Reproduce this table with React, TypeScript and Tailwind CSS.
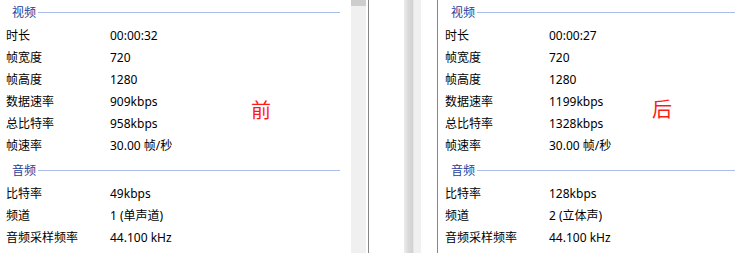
import React from "react";

type Row = [string, string];

const font = { fontFamily: '"Noto Sans", "Noto Sans CJK SC", sans-serif' };

function Header({ title, top }: { title: string; top?: boolean }) {
  return (
    <div className={top ? "flex h-[24px] items-center" : "flex h-[26px] items-center pt-[3px]"}>
      <span className="pl-[12px] pr-[2px] pt-px text-[12px] leading-[16px] text-[#1f3d9c]">{title}</span>
      <div className="h-px flex-1 bg-[#a9bde6]" />
    </div>
  );
}

function Rows({ rows }: { rows: Row[] }) {
  return (
    <div className="flex flex-col">
      {rows.map(([k, v]) => (
        <div key={k} className="flex h-[22px] items-center pt-[2px] text-[12px] leading-[16px] text-black">
          <span className="w-[104px] pl-[6px] box-content">{k}</span>
          <span>{v}</span>
        </div>
      ))}
    </div>
  );
}

function Panel({ video, audio }: { video: Row[]; audio: Row[] }) {
  return (
    <div className="flex flex-col">
      <Header title="视频" top />
      <Rows rows={video} />
      <Header title="音频" />
      <Rows rows={audio} />
    </div>
  );
}

export default function App() {
  const leftVideo: Row[] = [
    ["时长", "00:00:32"],
    ["帧宽度", "720"],
    ["帧高度", "1280"],
    ["数据速率", "909kbps"],
    ["总比特率", "958kbps"],
    ["帧速率", "30.00 帧/秒"],
  ];
  const leftAudio: Row[] = [
    ["比特率", "49kbps"],
    ["频道", "1 (单声道)"],
    ["音频采样频率", "44.100 kHz"],
  ];
  const rightVideo: Row[] = [
    ["时长", "00:00:27"],
    ["帧宽度", "720"],
    ["帧高度", "1280"],
    ["数据速率", "1199kbps"],
    ["总比特率", "1328kbps"],
    ["帧速率", "30.00 帧/秒"],
  ];
  const rightAudio: Row[] = [
    ["比特率", "128kbps"],
    ["频道", "2 (立体声)"],
    ["音频采样频率", "44.100 kHz"],
  ];

  return (
    <div className="relative flex h-[253px] w-[735px] overflow-hidden bg-white" style={font}>
      <div className="w-[351px] pr-[11px]">
        <Panel video={leftVideo} audio={leftAudio} />
      </div>
      <div className="w-[15px] bg-[#f0f0f0]">
        <div className="h-[6px] bg-[#cdcdcd]" />
      </div>
      <div className="w-[2px]" />
      <div className="w-px bg-[#868686]" />
      <div className="w-[35px]" />
      <div className="w-[9px] bg-gradient-to-r from-[#ececec] via-[#d9d9d9] to-[#d2d2d2]" />
      <div className="w-[8px] border-l border-[#e6e6e6] bg-[#f0f0f0]" />
      <div className="w-[16px]" />
      <div className="w-px bg-[#868686]" />
      <div className="flex-1 pl-px">
        <Panel video={rightVideo} audio={rightAudio} />
      </div>

      <span className="absolute left-[251px] top-[101px] text-[20px] leading-[20px] text-[#ff1a1a]">前</span>
      <span className="absolute left-[652px] top-[100px] text-[20px] leading-[20px] text-[#ff1a1a]">后</span>
    </div>
  );
}
